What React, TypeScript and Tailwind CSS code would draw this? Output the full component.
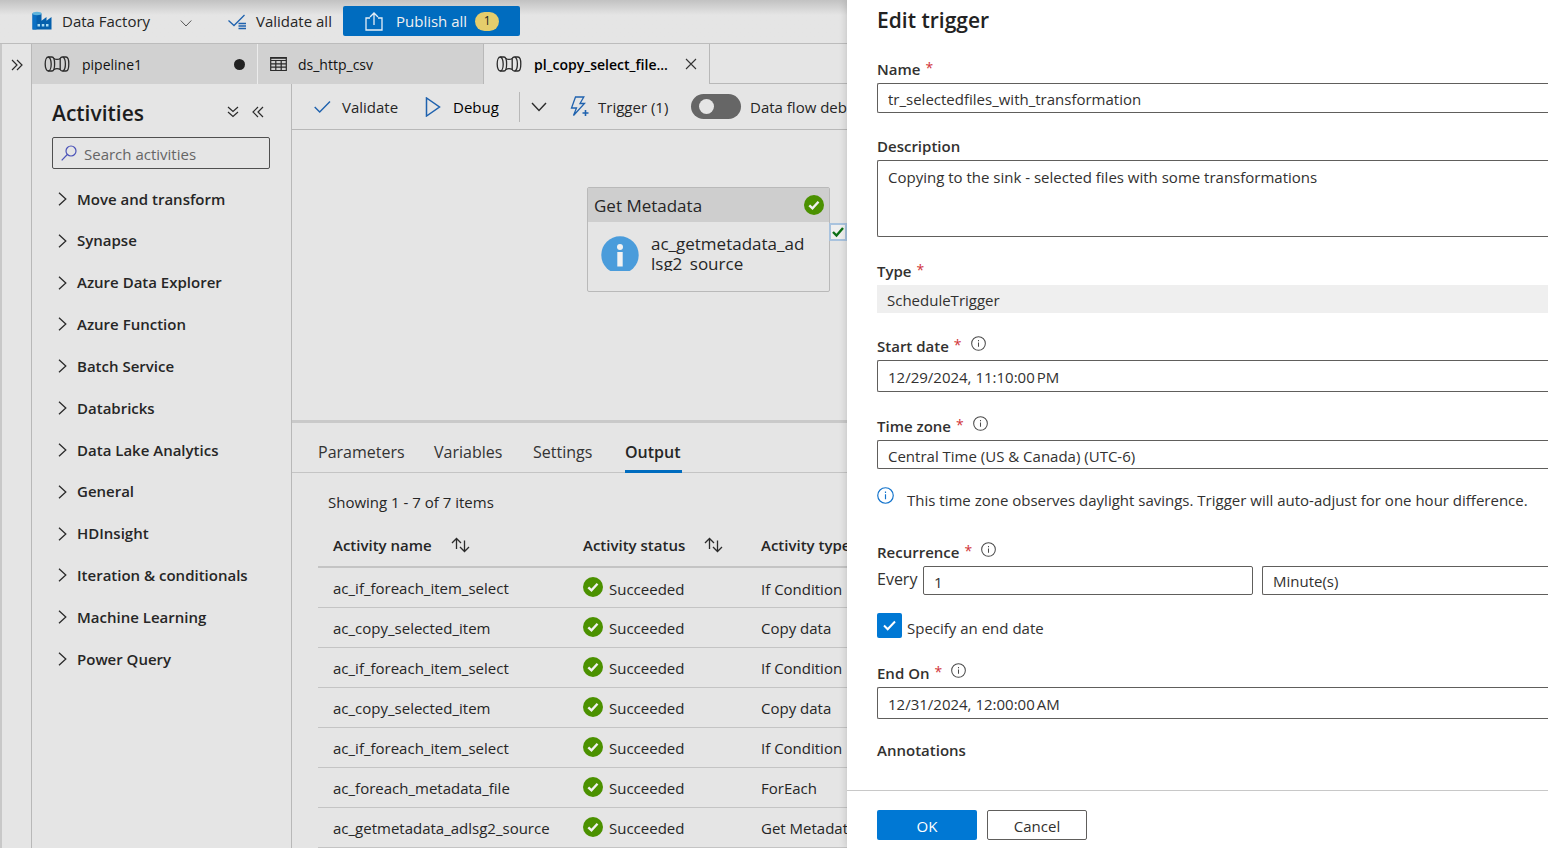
import type { ReactNode } from "react";

const ACTIVITY_GROUPS = [
  "Move and transform",
  "Synapse",
  "Azure Data Explorer",
  "Azure Function",
  "Batch Service",
  "Databricks",
  "Data Lake Analytics",
  "General",
  "HDInsight",
  "Iteration & conditionals",
  "Machine Learning",
  "Power Query",
];

const RUNS = [
  { name: "ac_if_foreach_item_select", type: "If Condition" },
  { name: "ac_copy_selected_item", type: "Copy data" },
  { name: "ac_if_foreach_item_select", type: "If Condition" },
  { name: "ac_copy_selected_item", type: "Copy data" },
  { name: "ac_if_foreach_item_select", type: "If Condition" },
  { name: "ac_foreach_metadata_file", type: "ForEach" },
  { name: "ac_getmetadata_adlsg2_source", type: "Get Metadata" },
];

function FactoryIcon() {
  return (
    <svg width="20" height="20" viewBox="0 0 20 20" className="shrink-0">
      <path d="M0.5 2.5v16h19V6l-5 3.8V6L9.500 9.800V2.500z" fill="#0560ad" />
      <path d="M0.500 2.500v16h4V2.500z" fill="#0a70c4" />
      <ellipse cx="5" cy="2.500" rx="4.500" ry="1.700" fill="#5fb4dc" />
      <path d="M5.500 13h2.500v2.500H5.500zM9.800 13h2.500v2.500H9.800zM14 13h2.500v2.500H14z" fill="#a9dcf5" />
    </svg>
  );
}

function PipelineIcon() {
  return (
    <svg width="26" height="16" viewBox="0 0 26 16" fill="none" stroke="#2b2b2b" strokeWidth="1.300" className="shrink-0">
      <ellipse cx="4.200" cy="8" rx="3" ry="7" />
      <path d="M4.200 1H8c1.600 0 2.600 3 2.600 7s-1 7-2.600 7H4.200" />
      <path d="M9.800 2.500c2 1.200 4.400 1.200 6.400 0v11c-2-1.200-4.400-1.200-6.400 0" />
      <path d="M16.200 2.500c.6-1 1.200-1.500 2-1.500H22c1.800 0 2.800 3.200 2.800 7s-1 7-2.800 7h-3.800c-.8 0-1.400-.5-2-1.500" />
      <path d="M19 1c1.600 1 2.400 4 2.400 7s-.8 6-2.400 7" />
    </svg>
  );
}

function TableIcon() {
  return (
    <svg width="17" height="16" viewBox="0 0 17 16" fill="none" stroke="#2b2b2b" strokeWidth="1.200" className="shrink-0">
      <path d="M.7 1.500h15.600v13H.7zM.7 4.500h15.600M.7 7.800h15.600M.7 11.200h15.600M5.800 4.500v10M11.200 4.500v10" />
      <path d="M.7 2h15.600" strokeWidth="1.600" />
    </svg>
  );
}

function Success() {
  return (
    <svg width="20" height="20" viewBox="0 0 20 20" className="shrink-0">
      <circle cx="10" cy="10" r="10" fill="#4b9100" />
      <path d="M5.300 10.300l3.200 3.100 6-6.600" fill="none" stroke="#f1f1f1" strokeWidth="2.400" />
    </svg>
  );
}

function Info({ big = false }: { big?: boolean }) {
  return (
    <svg
      width={big ? 17 : 15}
      height={big ? 17 : 15}
      viewBox="0 0 16 16"
      fill="none"
      stroke={big ? "#1273cc" : "#4a4a4a"}
      strokeWidth="1.100"
      className="shrink-0"
    >
      <circle cx="8" cy="8" r="7.300" />
      <path d="M8 6.800v4.700M8 4.300v1.300" />
    </svg>
  );
}

function Sort() {
  return (
    <svg width="19" height="16" viewBox="0 0 19 16" fill="none" stroke="#2b2b2b" strokeWidth="1.300" className="shrink-0">
      <path d="M5.500 12V1.500M1 6l4.500-4.500L10 6M13.500 3.500v11M9 10l4.500 4.500L18 10" />
    </svg>
  );
}

function Chevrons({ d, label }: { d: string; label: string }) {
  return (
    <button aria-label={label} className="shrink-0">
      <svg width="12" height="12" viewBox="0 0 12 12" fill="none" stroke="#2b2b2b" strokeWidth="1.200">
        <path d={d} />
      </svg>
    </button>
  );
}

function Label({ id, text, required = true, info = false }: { id: string; text: string; required?: boolean; info?: boolean }) {
  return (
    <div className="flex h-6 items-center pb-1">
      <label htmlFor={id} className="flex text-[15px] leading-5 font-semibold whitespace-nowrap">
        {text}
        {required && <span className="ml-[5px] text-[14px] leading-[18px] font-normal text-[#d13438]">*</span>}
      </label>
      {info && (
        <span className="mb-[5px] ml-[9px]">
          <Info />
        </span>
      )}
    </div>
  );
}

const FIELD = "block w-full rounded-l-[2px] border border-r-0 border-[#605e5c] bg-white pl-[10px] text-[15px] outline-none";

function ToolButton({ icon, children }: { icon: ReactNode; children: ReactNode }) {
  return (
    <button className="flex shrink-0 items-center whitespace-nowrap">
      {icon}
      {children}
    </button>
  );
}

function TopBar() {
  return (
    <header className="flex h-[44px] shrink-0 items-center border-b border-[#bcbcbc] bg-linear-to-b from-[#c2c2c2] to-[#e5e5e5] to-35% pb-px pl-8 text-[15px]">
      <button className="flex items-center gap-[10px] whitespace-nowrap">
        <FactoryIcon />
        <span className="w-[108px] text-left">Data Factory</span>
        <svg width="12" height="12" viewBox="0 0 12 12" fill="none" stroke="#555" className="mt-1">
          <path d="M.7 3.500L6 9l5.300-5.500" />
        </svg>
      </button>
      <button className="ml-9 flex items-center gap-[9px] whitespace-nowrap">
        <svg width="19" height="18" viewBox="0 0 19 18" fill="none" stroke="#1f62ae" strokeWidth="1.300">
          <path d="M.5 8.500L6 13.500 16.500 3M10.500 11.500H18M10.500 14H18M10.500 16.500H18" />
        </svg>
        <span className="w-[78px] text-left">Validate all</span>
      </button>
      <button className="ml-[9px] flex h-[30px] w-[177px] shrink-0 items-center rounded-[2px] bg-[#006cbf] pl-[22px] whitespace-nowrap text-[#f0f0f0]">
        <svg width="18" height="19" viewBox="0 0 18 19" fill="none" stroke="#e5eef6" strokeWidth="1.300">
          <path d="M5 6H1v12h16V6h-4M9 13V1M5 5l4-4 4 4" />
        </svg>
        <span className="ml-[13px]">Publish all</span>
        <span className="ml-[8px] flex h-[19px] w-6 items-center justify-center rounded-full bg-[#e5cd6c] text-xs text-[#222]">1</span>
      </button>
    </header>
  );
}

function FileTabs() {
  return (
    <div role="tablist" className="flex h-10 shrink-0 text-[14px] text-[#111]">
      <button role="tab" className="flex w-[226px] shrink-0 items-center border-r border-[#ececec] bg-[#d1d1d1] pr-3 pl-3">
        <PipelineIcon />
        <span className="ml-3">pipeline1</span>
        <span className="ml-auto size-[11px] rounded-full bg-[#222]" />
      </button>
      <button role="tab" className="flex w-[225px] shrink-0 items-center bg-[#d1d1d1] pl-3">
        <TableIcon />
        <span className="ml-[11px]">ds_http_csv</span>
      </button>
      <div className="flex w-[227px] shrink-0 items-center border-x border-[#b8b8b8] pr-3 pl-3">
        <button role="tab" aria-selected="true" className="flex items-center font-semibold text-black">
          <PipelineIcon />
          <span className="ml-3">pl_copy_select_file...</span>
        </button>
        <button aria-label="Close tab" className="ml-auto">
          <svg width="12" height="12" viewBox="0 0 12 12" stroke="#333" strokeWidth="1.100">
            <path d="M1 1l10 10M11 1L1 11" />
          </svg>
        </button>
      </div>
      <div className="flex-1 border-b border-[#b8b8b8]" />
    </div>
  );
}

function Activities() {
  return (
    <aside className="flex w-[260px] shrink-0 flex-col border-r border-[#b8b8b8]">
      <div className="flex h-[53px] items-center pt-1 pr-[27px] pl-5">
        <h2 className="pt-[2px] text-[21px] font-semibold text-[#1d1d1d]">Activities</h2>
        <div className="mb-[2px] ml-auto flex gap-[13px]">
          <Chevrons label="Expand all" d="M1 1l5 4.500L11 1M1 6l5 4.500L11 6" />
          <Chevrons label="Collapse panel" d="M6 1L1 6l5 5M11 1L6 6l5 5" />
        </div>
      </div>
      <label className="mr-[21px] ml-5 flex h-8 items-center rounded-[2px] border border-[#4f4f4f] pl-2">
        <svg width="16" height="16" viewBox="0 0 16 16" fill="none" stroke="#4a52b8" strokeWidth="1.200" className="shrink-0">
          <circle cx="10" cy="6" r="5" />
          <path d="M6.300 9.500L.7 15.300" />
        </svg>
        <input aria-label="Search activities" placeholder="Search activities" className="ml-[7px] w-full min-w-0 bg-transparent pt-[2px] text-[15px] outline-none placeholder:text-[#666]" />
      </label>
      <ul className="mt-[9px] flex h-[502px] flex-col">
        {ACTIVITY_GROUPS.map((name) => (
          <li key={name} className="flex flex-1">
            <button className="flex items-center gap-[10px] pl-[26px] text-[15px] font-semibold">
              <svg width="9" height="14" viewBox="0 0 9 14" fill="none" stroke="#2b2b2b" strokeWidth="1.300">
                <path d="M1 .7L7.800 7 1 13.300" />
              </svg>
              {name}
            </button>
          </li>
        ))}
      </ul>
    </aside>
  );
}

function Toolbar() {
  return (
    <div className="flex h-[46px] shrink-0 items-center border-b border-[#b8b8b8] pl-[22px] text-[15px]">
      <ToolButton
        icon={
          <svg width="17" height="14" viewBox="0 0 17 14" fill="none" stroke="#1f62ae" strokeWidth="1.400" className="mr-[11px]">
            <path d="M.7 7l5 5L16 1.500" />
          </svg>
        }
      >
        <span className="w-[58px] pt-[2px] text-left">Validate</span>
      </ToolButton>
      <span className="w-[25px] shrink-0" />
      <ToolButton
        icon={
          <svg width="16" height="20" viewBox="0 0 16 20" fill="none" stroke="#1f62ae" strokeWidth="1.500" className="mr-3">
            <path d="M1.500 1v18L14.500 10z" />
          </svg>
        }
      >
        <span className="w-[49px] pt-[2px] text-left text-black">Debug</span>
      </ToolButton>
      <button aria-label="Debug options" className="ml-[17px] flex h-[30px] shrink-0 items-center border-l border-[#b8b8b8] pl-[11px]">
        <svg width="16" height="10" viewBox="0 0 16 10" fill="none" stroke="#2b2b2b" strokeWidth="1.400">
          <path d="M1 1l7 7.500L15 1" />
        </svg>
      </button>
      <span className="w-[23px] shrink-0" />
      <ToolButton
        icon={
          <svg width="19" height="22" viewBox="0 0 19 22" fill="none" stroke="#1f62ae" strokeWidth="1.300" className="mr-[9px]">
            <path d="M5.500 1h8.300L10 7.500h4.500L3.500 19.500 6.500 12H1.500z" />
            <path d="M15.500 14v6M12.500 17h6" strokeWidth="1.600" />
          </svg>
        }
      >
        <span className="w-[73px] pt-[2px] text-left">Trigger (1)</span>
      </ToolButton>
      <button role="switch" aria-checked="false" aria-label="Data flow debug" className="ml-5 flex h-[25px] w-[50px] shrink-0 items-center rounded-full bg-[#666] pl-2">
        <span className="size-[15px] rounded-full bg-[#e5e5e5]" />
      </button>
      <span className="ml-[9px] pt-[2px] whitespace-nowrap">Data flow debug</span>
    </div>
  );
}

function Canvas() {
  return (
    <div className="relative h-[290px] shrink-0 overflow-hidden">
      <div className="absolute top-[57px] left-[295px] h-[105px] w-[243px] rounded-[2px] border border-[#b9b9b9]">
        <div className="flex h-[34px] items-center justify-between bg-[#cecece] pr-[5px] pl-[6px] text-[17px]">
          <span className="pt-px">Get Metadata</span>
          <Success />
        </div>
        <div className="mt-[12px] flex h-[37px] overflow-hidden pl-[13px]">
          <svg width="38" height="38" viewBox="0 0 38 38" className="mt-[2px] shrink-0">
            <circle cx="19" cy="19" r="18.700" fill="#4a9cdb" />
            <circle cx="19" cy="11" r="3" fill="#f2f2f2" />
            <path d="M16.300 16h5.400v14.500h-5.400z" fill="#f2f2f2" />
          </svg>
          <p className="ml-3 w-[156px] text-[17px] leading-5 break-all">ac_getmetadata_adlsg2_source</p>
        </div>
      </div>
      <div className="absolute top-[93px] left-[537px] flex size-[18px] items-center justify-center border-2 border-[#a9c3de] bg-[#efefef]">
        <svg width="12" height="12" viewBox="0 0 12 12" fill="none" stroke="#0b6e14" strokeWidth="2.400">
          <path d="M1 6l3.500 3.500L11 2" />
        </svg>
      </div>
    </div>
  );
}

function Output() {
  return (
    <section className="flex min-h-0 flex-1 flex-col overflow-hidden border-t-[3px] border-[#c9c9c9]">
      <div role="tablist" className="flex h-[50px] shrink-0 items-stretch gap-[30px] border-b border-[#c4c4c4] pl-[26px] text-[16px]">
        <button role="tab" className="w-[86px] pt-2 text-left text-[#333]">Parameters</button>
        <button role="tab" className="w-[69px] pt-2 text-left text-[#333]">Variables</button>
        <button role="tab" className="w-[62px] pt-2 text-left text-[#333]">Settings</button>
        <button role="tab" aria-selected="true" className="-mb-px w-[57px] border-b-[3px] border-[#006cbf] pt-[10px] text-left font-semibold">
          Output
        </button>
      </div>
      <p className="mt-[17px] mb-px ml-9 h-6 shrink-0 text-[15px] leading-6">Showing 1 - 7 of 7 items</p>
      <table className="mt-2 ml-[26px] w-[720px] table-fixed border-collapse text-left text-[15px]">
        <thead>
          <tr className="h-[44px] border-b-2 border-[#c4c4c4]">
            <th className="w-[250px] pl-[15px] font-semibold">
              <button className="flex items-center gap-[19px] whitespace-nowrap"><span className="pt-[2px]">Activity name</span> <Sort /></button>
            </th>
            <th className="w-[178px] pl-[15px] font-semibold">
              <button className="flex items-center gap-[19px] whitespace-nowrap"><span className="pt-[2px]">Activity status</span> <Sort /></button>
            </th>
            <th className="pt-[2px] pl-[15px] font-semibold">Activity type</th>
          </tr>
        </thead>
        <tbody>
          {RUNS.map((run, i) => (
            <tr key={i} className="h-10 border-b border-[#c4c4c4]">
              <td className="pt-[2px] pl-[15px]">{run.name}</td>
              <td className="pl-[15px]">
                <span className="flex items-center gap-[6px]">
                  <Success />
                  <span className="pt-[3px]">Succeeded</span>
                </span>
              </td>
              <td className="pt-[3px] pl-[15px]">{run.type}</td>
            </tr>
          ))}
        </tbody>
      </table>
    </section>
  );
}

function EditTrigger() {
  return (
    <section aria-label="Edit trigger" className="z-10 flex min-h-0 min-w-0 flex-col overflow-hidden bg-white text-[#323130] shadow-[0_0_8px_rgba(0,0,0,0.18)]">
      <div className="min-h-0 flex-1 overflow-hidden pl-[30px]">
        <h1 className="h-[59px] pt-1 text-[21px] leading-8 font-semibold text-[#222]">Edit trigger</h1>
        <Label id="name" text="Name" />
        <input id="name" defaultValue="tr_selectedfiles_with_transformation" className={`${FIELD} h-[30px] pt-[2px]`} />
        <div className="mt-[23px]">
          <Label id="description" text="Description" required={false} />
          <textarea id="description" defaultValue="Copying to the sink - selected files with some transformations" className={`${FIELD} h-[77px] resize-none pt-[6px] leading-5`} />
        </div>
        <div className="mt-6">
          <Label id="type" text="Type" />
          <input id="type" readOnly value="ScheduleTrigger" className="block h-7 w-full bg-[#efefef] pt-[2px] pl-[10px] text-[15px] outline-none" />
        </div>
        <div className="mt-[23px]">
          <Label id="start" text="Start date" info />
          <input id="start" defaultValue={"12/29/2024, 11:10:00\u202fPM"} className={`${FIELD} h-8 pt-[2px]`} />
        </div>
        <div className="mt-6">
          <Label id="zone" text="Time zone" info />
          <select id="zone" className={`${FIELD} h-[29px] appearance-none pt-[3px]`}>
            <option>Central Time (US &amp; Canada) (UTC-6)</option>
          </select>
        </div>
        <p className="mt-[18px] flex h-[26px] gap-[13px] text-[15px] leading-[26px] whitespace-nowrap">
          <Info big />
          This time zone observes daylight savings. Trigger will auto-adjust for one hour difference.
        </p>
        <div className="mt-[29px]">
          <Label id="every" text="Recurrence" info />
          <div className="flex">
            <span className="w-[46px] shrink-0 text-[16px] leading-[26px]">Every</span>
            <input id="every" defaultValue="1" className="h-[29px] w-[330px] rounded-[2px] border border-[#605e5c] pt-[2px] pl-[10px] text-[15px] outline-none" />
            <select aria-label="Recurrence unit" className="ml-[9px] h-[29px] min-w-0 flex-1 appearance-none rounded-l-[2px] border border-r-0 border-[#605e5c] pt-[2px] pl-[10px] text-[15px] outline-none">
              <option>Minute(s)</option>
            </select>
          </div>
        </div>
        <label className="mt-[18px] flex h-[25px] items-center gap-[5px] text-[15px]">
          <span className="grid">
            <input type="checkbox" defaultChecked className="col-start-1 row-start-1 size-[25px] appearance-none rounded-[2px] bg-[#0078d4]" />
            <svg width="13" height="11" viewBox="0 0 13 11" fill="none" stroke="#fff" strokeWidth="2" className="pointer-events-none col-start-1 row-start-1 self-center justify-self-center">
              <path d="M1 5.500l3.700 3.700L12 1.500" />
            </svg>
          </span>
          <span className="pt-[6px]">Specify an end date</span>
        </label>
        <div className="mt-[25px]">
          <Label id="end" text="End On" info />
          <input id="end" defaultValue={"12/31/2024, 12:00:00\u202fAM"} className={`${FIELD} h-8 pt-[2px]`} />
        </div>
        <h3 className="mt-[19px] text-[15px] leading-6 font-semibold">Annotations</h3>
      </div>
      <footer className="flex h-[58px] shrink-0 gap-[10px] border-t border-[#c8c8c8] pt-[19px] pl-[30px] text-[15px]">
        <button className="h-[30px] w-[100px] rounded-[2px] bg-[#0078d4] pt-[2px] text-white">OK</button>
        <button className="h-[30px] w-[100px] rounded-[2px] border border-[#605e5c] pt-[2px]">Cancel</button>
      </footer>
    </section>
  );
}

export default function App() {
  return (
    <div className="grid h-screen grid-cols-[847fr_701fr] grid-rows-1 overflow-hidden bg-[#e5e5e5] font-['Open_Sans','Noto_Sans',sans-serif] text-[#262626]">
      <main className="flex min-h-0 min-w-0 flex-col overflow-hidden">
        <TopBar />
        <div className="flex min-h-0 flex-1 border-l-2 border-[#c8c8c8]">
          <nav className="w-[30px] shrink-0 border-r border-[#b8b8b8] pt-[9px] pl-[9px]">
            <Chevrons label="Expand menu" d="M1 1l5 5-5 5M6 1l5 5-5 5" />
          </nav>
          <div className="flex min-w-0 flex-1 flex-col">
            <FileTabs />
            <div className="flex min-h-0 flex-1">
              <Activities />
              <div className="flex min-w-0 flex-1 flex-col overflow-hidden">
                <Toolbar />
                <Canvas />
                <Output />
              </div>
            </div>
          </div>
        </div>
      </main>
      <EditTrigger />
    </div>
  );
}
